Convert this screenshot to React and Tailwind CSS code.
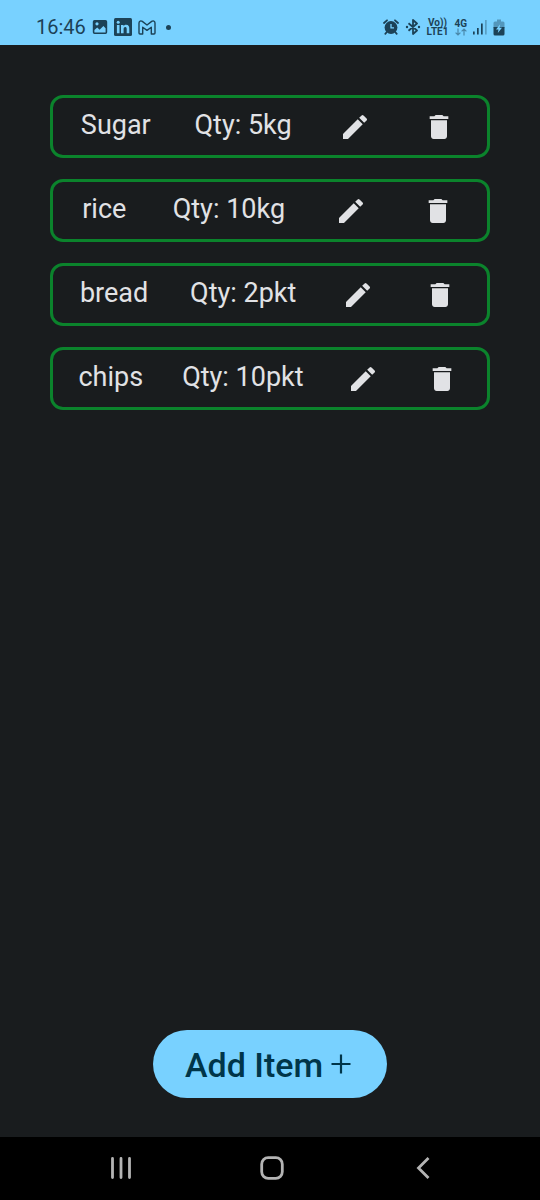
import React from "react";
import { MdEdit, MdDelete } from "react-icons/md";

const items = [
  { name: "Sugar", qty: "5kg" },
  { name: "rice", qty: "10kg" },
  { name: "bread", qty: "2pkt" },
  { name: "chips", qty: "10pkt" },
];

function ImageIcon() {
  return (
    <svg width="16" height="16" viewBox="0 0 16 16" aria-hidden="true">
      <path
        fill="currentColor"
        fillRule="evenodd"
        d="M2.5 1h11A1.7 1.7 0 0 1 15.2 2.7v10.6a1.7 1.7 0 0 1-1.7 1.7h-11A1.7 1.7 0 0 1 .8 13.3V2.7A1.7 1.7 0 0 1 2.5 1zM5 3.2a1.6 1.6 0 1 0 0 3.2 1.6 1.6 0 0 0 0-3.2zM2.400 11v2.400h11.200V9.200L11.400 7 7.600 10.800 5.200 8.600z"
      />
    </svg>
  );
}

function LinkedInIcon() {
  return (
    <svg width="18" height="18" viewBox="0 0 18 18" aria-hidden="true">
      <rect width="18" height="18" rx="1.5" fill="currentColor" />
      <g fill="#78d1ff">
        <circle cx="4.2" cy="4.2" r="1.5" />
        <path d="M2.9 7h2.6v8.3H2.9zM7 7h2.5v1.2c.5-.8 1.4-1.4 2.6-1.4 2.6 0 3.2 1.7 3.2 3.9v4.6h-2.6v-4.1c0-1.1-.1-2.2-1.4-2.2-1.4 0-1.7 1.1-1.7 2.2v4.1H7z" />
      </g>
    </svg>
  );
}

function GmailIcon() {
  return (
    <svg width="18" height="15" viewBox="0 0 18 15" fill="none" stroke="currentColor" strokeWidth="1.4" strokeLinejoin="round" aria-hidden="true">
      <path d="M1 3C1 1 3 .4 4.300 1.400L9 5l4.700-3.600C15 .4 17 1 17 3v10a1 1 0 0 1-1 1h-2.700V7.200L9 10.400 4.700 7.200V14H2a1 1 0 0 1-1-1z" />
    </svg>
  );
}

function AlarmIcon() {
  return (
    <svg width="16" height="16" viewBox="0 0 16 16" aria-hidden="true">
      <circle cx="8" cy="8.5" r="6.4" fill="currentColor" />
      <path d="M1 4 4 1.300M15 4 12 1.300M3.800 13l-1.500 1.800M12.200 13l1.500 1.800" stroke="currentColor" strokeWidth="1.800" strokeLinecap="round" />
      <path d="M8 5v3.800h3" fill="none" stroke="#78d1ff" strokeWidth="1.300" />
    </svg>
  );
}

function BluetoothIcon() {
  return (
    <svg width="16" height="16" viewBox="0 0 16 16" fill="none" stroke="currentColor" strokeWidth="1.800" strokeLinejoin="round" aria-hidden="true">
      <path d="M3.500 4.300 12 11.500 8 15V1l4 3.500L3.500 11.700" />
      <circle cx="2" cy="8" r="1.200" fill="currentColor" stroke="none" />
      <circle cx="14" cy="8" r="1.200" fill="currentColor" stroke="none" />
    </svg>
  );
}

function DataArrows() {
  return (
    <svg width="12" height="8" viewBox="0 0 12 8" fill="none" stroke="currentColor" strokeWidth="1.200" className="opacity-50" aria-hidden="true">
      <path d="M3 .5v6.500M.6 4.600 3 7l2.400-2.400M9 7.500V1M6.600 3.400 9 1l2.400 2.400" />
    </svg>
  );
}

function SignalIcon() {
  return (
    <svg width="14" height="16" viewBox="0 0 14 16" fill="currentColor" aria-hidden="true">
      <rect x="0" y="12.500" width="1.700" height="3" />
      <rect x="4" y="9" width="1.700" height="6.500" />
      <rect x="8" y="4.500" width="1.700" height="11" />
      <rect x="12" y="1" width="1.700" height="14.500" opacity=".35" />
    </svg>
  );
}

function BatteryIcon() {
  return (
    <svg width="12" height="17" viewBox="0 0 12 17" aria-hidden="true">
      <path d="M4 .5h4v2h2A1.500 1.500 0 0 1 11.500 4v5H.5V4A1.500 1.500 0 0 1 2 2.500h2z" fill="currentColor" opacity=".4" />
      <path d="M.5 8h11v7a1.500 1.500 0 0 1-1.500 1.500H2A1.500 1.500 0 0 1 .5 15z" fill="currentColor" />
      <path d="M7.200 5.200 3 10.600h2.500L4.800 14 9 8.800H6.500z" fill="#78d1ff" />
    </svg>
  );
}

function StatusBar() {
  return (
    <header className="flex h-[45px] items-center justify-between bg-[#78d1ff] pt-[9px] pr-[35px] pl-9 text-[#1c4257]">
      <div className="flex items-center gap-1.5">
        <time className="text-[20px] leading-6">16:46</time>
        <ImageIcon />
        <LinkedInIcon />
        <GmailIcon />
        <span className="ml-1 size-[5px] rounded-full bg-current" />
      </div>
      <div className="flex items-center gap-1.5">
        <AlarmIcon />
        <BluetoothIcon />
        <div className="flex flex-col items-center text-[10px] leading-[9px] font-bold">
          <span>Vo))</span>
          <span>LTE1</span>
        </div>
        <div className="flex flex-col items-center text-[10px] leading-[9px] font-bold">
          <span>4G</span>
          <DataArrows />
        </div>
        <SignalIcon />
        <BatteryIcon />
      </div>
    </header>
  );
}

function ItemRow({ name, qty }) {
  return (
    <li className="flex h-[63px] items-center justify-around rounded-[13px] border-[3px] border-[#0b832c] px-1.5">
      <span className="pb-1 text-[27px] leading-8">{name}</span>
      <span className="pb-1 text-[27px] leading-8">Qty: {qty}</span>
      <button type="button" aria-label={`Edit ${name}`} className="flex w-10 justify-center">
        <MdEdit className="size-8" />
      </button>
      <button type="button" aria-label={`Delete ${name}`} className="flex w-10 justify-center">
        <MdDelete className="size-8" />
      </button>
    </li>
  );
}

function NavBar() {
  return (
    <nav className="flex h-[63px] items-center bg-black pr-[42px] pb-0.5 pl-[45px] text-[#b4b4b4]">
      <button type="button" aria-label="Recent apps" className="flex flex-1 justify-center">
        <svg width="24" height="24" viewBox="0 0 24 24" stroke="currentColor" strokeWidth="2.800" strokeLinecap="round">
          <path d="M3.500 2.500v19M12 2.500v19M20.500 2.500v19" />
        </svg>
      </button>
      <button type="button" aria-label="Home" className="flex flex-1 justify-center">
        <svg width="24" height="24" viewBox="0 0 24 24" fill="none" stroke="currentColor" strokeWidth="2.800">
          <rect x="1.700" y="1.700" width="20.600" height="20.600" rx="6.500" />
        </svg>
      </button>
      <button type="button" aria-label="Back" className="flex flex-1 justify-center">
        <svg width="24" height="24" viewBox="0 0 24 24" fill="none" stroke="currentColor" strokeWidth="2.800">
          <path d="M17.500 2 7.500 12l10 10" />
        </svg>
      </button>
    </nav>
  );
}

export default function App() {
  return (
    <div className="flex min-h-screen flex-col bg-[#191c1e] font-['Roboto',sans-serif] text-[#e1e2e5]">
      <StatusBar />
      <main className="flex flex-1 flex-col justify-between px-[50px] pt-[50px] pb-[39px]">
        <ul className="flex flex-col gap-[21px]">
          {items.map((item) => (
            <ItemRow key={item.name} name={item.name} qty={item.qty} />
          ))}
        </ul>
        <button
          type="button"
          className="flex h-[68px] items-center gap-2 self-center rounded-full bg-[#78d1ff] pr-9 pl-8 text-[34px] leading-10 font-medium text-[#003549]"
        >
          <span className="pt-0.5">Add Item</span>
          <svg width="20" height="20" viewBox="0 0 20 20" stroke="currentColor" strokeWidth="2.200" aria-hidden="true">
            <path d="M10 .5v19M.5 10h19" />
          </svg>
        </button>
      </main>
      <NavBar />
    </div>
  );
}
